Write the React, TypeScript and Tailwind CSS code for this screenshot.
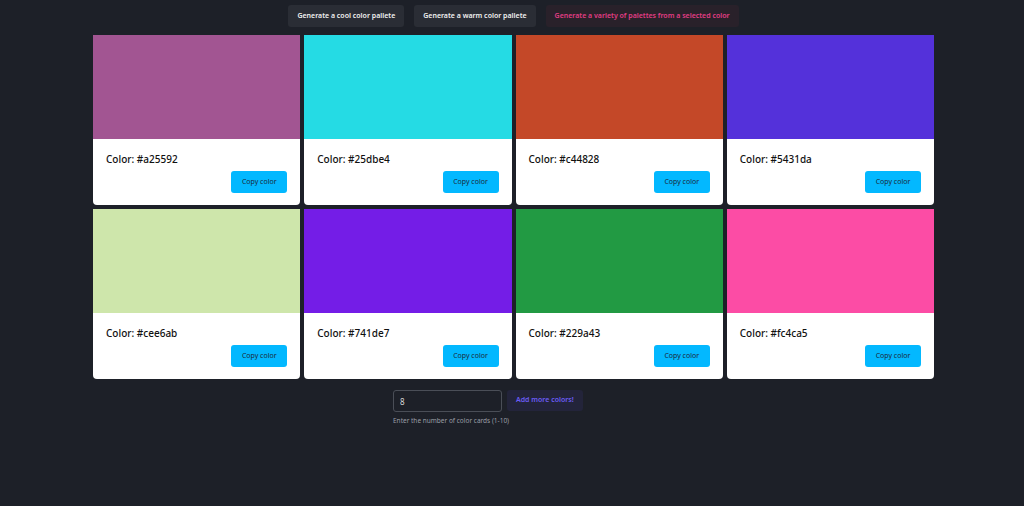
import { useState } from "react"

const colors = [
  "#a25592",
  "#25dbe4",
  "#c44828",
  "#5431da",
  "#cee6ab",
  "#741de7",
  "#229a43",
  "#fc4ca5",
]

function ColorCard({ hex }: { hex: string }) {
  return (
    <div className="flex h-[170px] flex-col overflow-hidden rounded-b-[4px] bg-white">
      <div className="h-[104px] w-full" style={{ backgroundColor: hex }} />
      <div className="flex flex-1 flex-col px-[13px] pt-[14px]">
        <p className="text-[10px] font-medium leading-[12px] text-[#111]">
          Color: {hex}
        </p>
        <div className="mt-[6px] flex justify-end">
          <button className="h-[22px] w-[56px] rounded-[3px] bg-[#03b8ff] text-[7px] text-[#1b2a3a]">
            Copy color
          </button>
        </div>
      </div>
    </div>
  )
}

export default function App() {
  const [count, setCount] = useState("8")

  return (
    <div
      className="h-[506px] w-full overflow-hidden bg-[#1d2028]"
      style={{ fontFamily: '"Noto Sans", "Open Sans", sans-serif' }}
    >
      {/* Palette actions */}
      <div className="flex h-[35px] items-start justify-center gap-[10px] pl-[3px] pt-[5px]">
        <button className="h-[22px] rounded-[3px] bg-[#2a2d35] px-[9px] text-[7px] font-semibold text-[#f1f1f1]">
          Generate a cool color pallete
        </button>
        <button className="h-[22px] rounded-[3px] bg-[#2a2d35] px-[9px] text-[7px] font-semibold text-[#f1f1f1]">
          Generate a warm color pallete
        </button>
        <button className="h-[22px] rounded-[3px] bg-[#29212a] px-[9px] text-[7px] font-semibold text-[#e23d85]">
          Generate a variety of palettes from a selected color
        </button>
      </div>

      {/* Color cards */}
      <div className="ml-[93px] grid w-[841px] grid-cols-4 gap-[4px]">
        {colors.map((hex) => (
          <ColorCard key={hex} hex={hex} />
        ))}
      </div>

      {/* Add more */}
      <div className="ml-[393px] mt-[11px] flex flex-col">
        <div className="flex items-start gap-[5px]">
          <input
            value={count}
            onChange={(e) => setCount(e.target.value)}
            className="h-[22px] w-[109px] rounded-[3px] border border-[#4a4e57] bg-[#1d2028] px-[6px] text-[8px] text-[#d8d8d8] outline-none"
          />
          <button className="h-[21px] rounded-[3px] bg-[#23243a] px-[9px] text-[7px] font-semibold text-[#6b5cf5]">
            Add more colors!
          </button>
        </div>
        <p className="mt-[4px] text-[6.5px] text-[#9a9ea6]">
          Enter the number of color cards (1-10)
        </p>
      </div>
    </div>
  )
}
